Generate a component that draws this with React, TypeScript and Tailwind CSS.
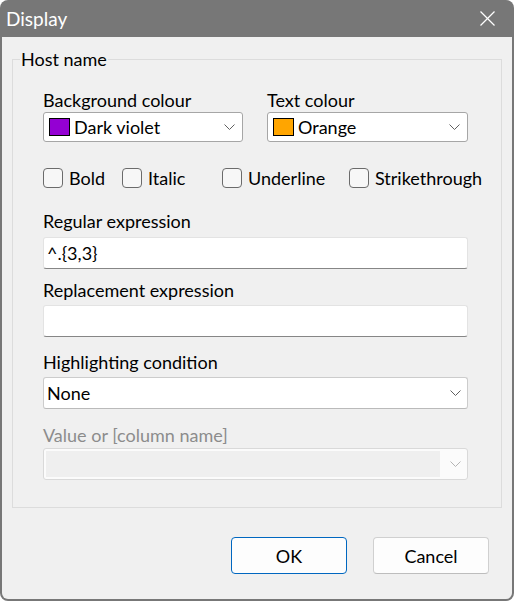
import React from 'react';

function Chevron({ color = '#606060' }: { color?: string }) {
  return (
    <svg width="11" height="6" viewBox="0 0 11 6" className="shrink-0">
      <polyline points="0.5,0.5 5.5,5.5 10.5,0.5" fill="none" stroke={color} strokeWidth="1" />
    </svg>
  );
}

function ColourCombo({ swatch, label }: { swatch: string; label: string }) {
  return (
    <div className="h-[30px] flex items-center bg-white border border-[#a6a6a6] rounded-[3px] pl-[5px] pr-[7px]">
      <span className={`w-[21px] h-[18px] border border-black shrink-0 ${swatch}`} />
      <span className="ml-[4px] flex-1 leading-[22px]">{label}</span>
      <Chevron />
    </div>
  );
}

function Check({ label, width }: { label: string; width: string }) {
  return (
    <label className={`flex items-center h-[20px] ${width}`}>
      <span className="w-[20px] h-[20px] rounded-[4px] border border-[#6b6b6b] bg-[#f7f7f7] shrink-0" />
      <span className="ml-[6px] leading-[22px] whitespace-nowrap">{label}</span>
    </label>
  );
}

function TextBox({ value }: { value?: string }) {
  return (
    <div className="h-[32px] flex items-center bg-white border border-[#e3e3e3] border-b-[#868686] rounded-[3px] pl-[3px] leading-[22px]">
      {value}
    </div>
  );
}

export default function App() {
  return (
    <div className="w-[514px] h-[601px] bg-white font-['Lato',sans-serif] text-[18px] text-black">
      <div className="w-full h-full rounded-[8px] bg-[#777777] px-[2px] pb-[2px] flex flex-col">
        {/* title bar */}
        <div className="h-[37px] shrink-0 flex items-center justify-between pl-[4px] pr-[17px]">
          <span className="text-white text-[19px] leading-[24px]">Display</span>
          <svg width="15" height="15" viewBox="0 0 15 15">
            <line x1="0.5" y1="0.5" x2="14.5" y2="14.5" stroke="white" strokeWidth="1.3" />
            <line x1="14.5" y1="0.5" x2="0.5" y2="14.5" stroke="white" strokeWidth="1.3" />
          </svg>
        </div>

        <div className="flex-1 bg-[#f0f0f0] rounded-b-[6px] flex flex-col px-[10px] pt-[11px]">
          <fieldset className="m-0 p-0 min-w-0 border border-[#dcdcdc]">
            <legend className="ml-[7px] px-[1px] leading-[22px]">Host name</legend>
            <div className="pl-[30px] pr-[33px] pt-[19px] pb-[27px] flex flex-col">
              <div className="flex gap-[24px]">
                <div className="w-[200px] flex flex-col">
                  <span className="leading-[22px]">Background colour</span>
                  <div className="mt-[1px]">
                    <ColourCombo swatch="bg-[#9400d3]" label="Dark violet" />
                  </div>
                </div>
                <div className="flex-1 flex flex-col">
                  <span className="leading-[22px]">Text colour</span>
                  <div className="mt-[1px]">
                    <ColourCombo swatch="bg-[#ffa500]" label="Orange" />
                  </div>
                </div>
              </div>

              <div className="flex mt-[26px]">
                <Check label="Bold" width="w-[79px] shrink-0" />
                <Check label="Italic" width="w-[100px] shrink-0" />
                <Check label="Underline" width="w-[127px] shrink-0" />
                <Check label="Strikethrough" width="flex-1" />
              </div>

              <span className="mt-[22px] leading-[22px]">Regular expression</span>
              <div className="mt-[5px]">
                <TextBox value="^.{3,3}" />
              </div>

              <span className="mt-[10px] leading-[22px]">Replacement expression</span>
              <div className="mt-[4px]">
                <TextBox />
              </div>

              <span className="mt-[14px] leading-[22px]">Highlighting condition</span>
              <div className="mt-[4px] h-[32px] flex items-center bg-white border border-[#cccccc] border-b-[#bababa] rounded-[3px] pl-[3px] pr-[6px]">
                <span className="flex-1 leading-[22px]">None</span>
                <Chevron />
              </div>

              <span className="mt-[15px] leading-[22px] text-[#8c8c8c]">Value or [column name]</span>
              <div className="mt-[2px] h-[32px] flex items-center bg-[#fbfbfb] border border-[#d9d9d9] rounded-[3px] p-[2px] pr-[6px]">
                <div className="w-[394px] h-full bg-[#efefef]" />
                <div className="flex-1" />
                <Chevron color="#b4b4b4" />
              </div>
            </div>
          </fieldset>

          <div className="flex justify-end gap-[26px] pr-[13px] mt-[29px]">
            <button className="w-[116px] h-[37px] bg-[#fdfdfd] border border-[#0067c0] rounded-[4px] leading-[22px]">
              OK
            </button>
            <button className="w-[116px] h-[37px] bg-[#fdfdfd] border border-[#d0d0d0] border-b-[#bdbdbd] rounded-[4px] leading-[22px]">
              Cancel
            </button>
          </div>
        </div>
      </div>
    </div>
  );
}
